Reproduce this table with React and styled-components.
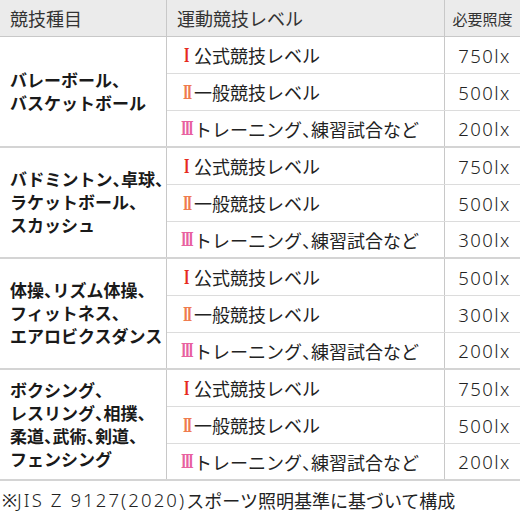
import styled, { createGlobalStyle } from "styled-components"

const GlobalStyle = createGlobalStyle`
    body {
        margin: 0;
        background: #fff;
        font-family: "Noto Sans", "Noto Sans CJK JP", sans-serif;
        color: #222;
    }
`

const groups = [
    {
        sport: ["バレーボール、", "バスケットボール"],
        lux: ["750lx", "500lx", "200lx"],
    },
    {
        sport: ["バドミントン、卓球、", "ラケットボール、", "スカッシュ"],
        lux: ["750lx", "500lx", "300lx"],
    },
    {
        sport: ["体操、リズム体操、", "フィットネス、", "エアロビクスダンス"],
        lux: ["500lx", "300lx", "200lx"],
    },
    {
        sport: ["ボクシング、", "レスリング、相撲、", "柔道、武術、剣道、", "フェンシング"],
        lux: ["750lx", "500lx", "200lx"],
    },
]

const levels = [
    { mark: "I", color: "#e62a1e", label: "公式競技レベル" },
    { mark: "II", color: "#ef7b4e", label: "一般競技レベル" },
    { mark: "III", color: "#e8619f", label: "トレーニング、練習試合など" },
]

// 読点だけ半角幅にする
const withCommas = text =>
    text.split(/(、)/).map((part, i) =>
        part === "、" ? <StyledComma key={i}>、</StyledComma> : part
    )

export default function App() {
    return (
        <>
            <GlobalStyle />
            <StyledPage>
                <StyledHeader>
                    <StyledHeadCell>競技種目</StyledHeadCell>
                    <StyledHeadCell>運動競技レベル</StyledHeadCell>
                    <StyledHeadCell $last $small>必要照度</StyledHeadCell>
                </StyledHeader>
                {groups.map((group, gi) => (
                    <StyledGroup key={gi}>
                        <StyledSport>
                            {group.sport.map(line => <span key={line}>{withCommas(line)}</span>)}
                        </StyledSport>
                        <StyledLevels>
                            {levels.map((level, li) => (
                                <StyledLevelRow key={li} $last={li === levels.length - 1}>
                                    <StyledLevelCell>
                                        <StyledMarkBox>
                                            <StyledMark $color={level.color}>{level.mark}</StyledMark>
                                        </StyledMarkBox>
                                        {withCommas(level.label)}
                                    </StyledLevelCell>
                                    <StyledLux>{group.lux[li]}</StyledLux>
                                </StyledLevelRow>
                            ))}
                        </StyledLevels>
                    </StyledGroup>
                ))}
                <StyledNote>
                    ※<StyledLatin>JIS Z 9127(2020)</StyledLatin>スポーツ照明基準に基づいて構成
                </StyledNote>
            </StyledPage>
        </>
    )
}

const StyledPage = styled.div`
    width: 520px;
    display: flex;
    flex-direction: column;
`

const StyledHeader = styled.div`
    display: grid;
    grid-template-columns: 167px 278px 1fr;
    height: 36px;
    background: #ebebeb;
    border-bottom: 1px solid #c8c8c8;
`

const StyledHeadCell = styled.div`
    display: flex;
    align-items: center;
    justify-content: ${p => p.$small ? "center" : "flex-start"};
    padding-left: ${p => p.$small ? "0" : "10px"};
    font-size: ${p => p.$small ? "15px" : "18px"};
    color: #333;
    border-right: ${p => p.$last ? "none" : "1px solid #c8c8c8"};
`

const StyledComma = styled.span`
    font-feature-settings: "halt";
`

const StyledGroup = styled.div`
    display: grid;
    grid-template-columns: 167px 1fr;
    border-bottom: 2px solid #d4d4d4;
`

const StyledSport = styled.div`
    display: flex;
    flex-direction: column;
    justify-content: center;
    padding-left: 10px;
    font-size: 17px;
    font-weight: 700;
    line-height: 23px;
    color: #1a1a1a;
    white-space: nowrap;
    border-right: 1px solid #c8c8c8;
`

const StyledLevels = styled.div`
    display: flex;
    flex-direction: column;
`

const StyledLevelRow = styled.div`
    display: grid;
    grid-template-columns: 278px 1fr;
    height: ${p => p.$last ? "35px" : "36px"};
    border-bottom: ${p => p.$last ? "none" : "1px solid #dcdcdc"};
`

const StyledLevelCell = styled.div`
    display: flex;
    align-items: center;
    padding-left: 12px;
    font-size: 18px;
    color: #222;
    white-space: nowrap;
    border-right: 1px solid #c8c8c8;
`

const StyledMarkBox = styled.span`
    display: inline-flex;
    justify-content: center;
    width: 13px;
    margin-right: 2px;
`

const StyledMark = styled.span`
    display: inline-block;
    font-family: "Liberation Serif", serif;
    font-size: 21px;
    font-weight: 700;
    line-height: 1;
    letter-spacing: -2.6px;
    padding-left: 2.6px;
    transform: scaleX(0.66);
    color: ${p => p.$color};
`

const StyledLux = styled.div`
    display: flex;
    align-items: center;
    justify-content: center;
    padding-left: 4px;
    font-size: 18.5px;
    letter-spacing: 1.4px;
    font-weight: 300;
    color: #222;
`

const StyledNote = styled.div`
    height: 32px;
    display: flex;
    align-items: center;
    padding: 5px 0 0 2px;
    box-sizing: border-box;
    font-size: 18px;
    color: #222;
    white-space: nowrap;
`

const StyledLatin = styled.span`
    font-size: 18.5px;
    letter-spacing: 2.1px;
    font-weight: 300;
`
